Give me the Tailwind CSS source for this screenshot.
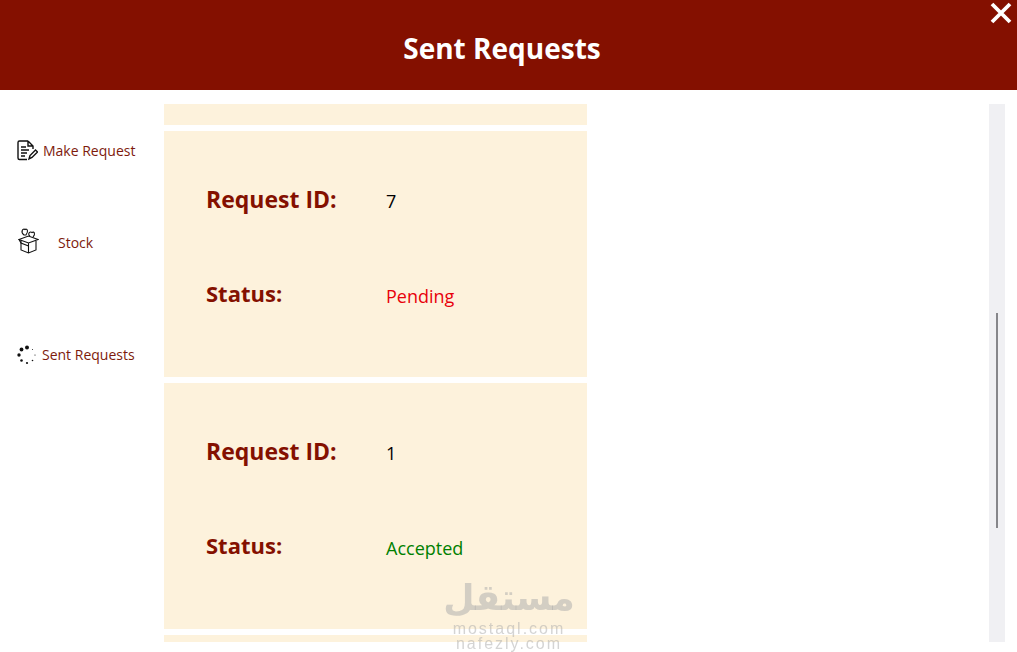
<!DOCTYPE html>
<html lang="en">

<head>
    <meta charset="UTF-8">
    <meta name="viewport" content="width=device-width, initial-scale=1.0">
    <title>Sent Requests</title>
    <script src="https://cdn.jsdelivr.net/npm/@tailwindcss/browser@4"></script>
</head>

<body class="bg-white w-[1017px] h-[652px] overflow-hidden relative font-['Open_Sans','Noto_Sans',sans-serif]">
    <header class="h-[90px] bg-[#841000] relative flex items-center justify-center">
        <h1 class="text-white text-[28px] font-bold ml-[-13px] mt-[5px]">Sent Requests</h1>
        <svg class="absolute right-[4px] top-[1px] w-[24px] h-[24px]" viewBox="0 0 24 24">
            <path d="M3 3 L21 21 M21 3 L3 21" stroke="#fff" stroke-width="3.8" />
        </svg>
    </header>

    <div class="flex h-[562px]">
        <!-- sidebar -->
        <nav class="w-[164px] shrink-0 relative text-[#7d1a0c] text-[14px]">
            <a class="absolute left-[17px] top-[50px] flex items-center gap-[5px]">
                <svg class="w-[21px] h-[21px]" viewBox="0 0 21 21" fill="none" stroke="#111" stroke-width="1.4">
                    <path d="M11 1 H2.500 A1.500 1.500 0 0 0 1 2.500 V18 A1.500 1.500 0 0 0 2.500 19.500 H10 M11 1 L16 6 V9 M11 1 V6 H16" />
                    <path d="M4 7 H9 M4 10 H12 M4 13 H10 M4 16 H8" />
                    <path d="M12 19 L13 15.500 L18.500 10 L20.500 12 L15 17.500 Z" />
                </svg>
                <span>Make Request</span>
            </a>
            <a class="absolute left-[18px] top-[137px] flex items-center gap-[19px] h-[28px] pt-[2px]">
                <svg class="w-[21px] h-[27px] mt-[-3px]" viewBox="0 0 21 27" fill="none" stroke="#111" stroke-width="1.1">
                    <path d="M3 14 V23 L10.500 26 L18 23 V14" />
                    <path d="M1 12.500 L10.500 9 L20 12.500 L10.500 16 Z M10.500 16 V26 M1 12.500 L3 16 L10.500 19" />
                    <path d="M6 8 C2 5 5 1 7 2.500 C9 1 11 4 8 8 Z" />
                    <path d="M12 9 C9 7 12 4 14 5.500 C16 4 18 7 15 10" />
                </svg>
                <span>Stock</span>
            </a>
            <a class="absolute left-[17px] top-[254px] flex items-center gap-[5px]">
                <svg class="w-[20px] h-[20px]" viewBox="0 0 20 20" fill="#111">
                    <circle cx="10" cy="2.500" r="2" />
                    <circle cx="4.500" cy="4.500" r="1.900" />
                    <circle cx="2" cy="10" r="1.700" />
                    <circle cx="4.500" cy="15.500" r="1.300" />
                    <circle cx="10" cy="18" r="1.100" />
                    <circle cx="15.500" cy="15.500" r="0.800" />
                    <circle cx="18" cy="10" r="0.600" />
                    <circle cx="15.500" cy="4.500" r="0.500" />
                </svg>
                <span>Sent Requests</span>
            </a>
        </nav>

        <!-- request list -->
        <main class="w-[423px] mt-[14px] h-[538px] flex flex-col gap-[6px] overflow-hidden">
            <div class="h-[21px] shrink-0 bg-[#fdf2dc]"></div>

            <section class="h-[246px] shrink-0 bg-[#fdf2dc] pl-[42px] pt-[52px]">
                <div class="flex items-center h-[32px]">
                    <span class="w-[180px] text-[#841000] text-[23px] font-bold">Request ID:</span>
                    <span class="text-black text-[18px] mt-[5px]">7</span>
                </div>
                <div class="flex items-center h-[32px] mt-[62px]">
                    <span class="w-[180px] text-[#841000] text-[22px] font-bold">Status:</span>
                    <span class="text-[#e8000b] text-[18px] mt-[7px]">Pending</span>
                </div>
            </section>

            <section class="h-[246px] shrink-0 bg-[#fdf2dc] pl-[42px] pt-[52px]">
                <div class="flex items-center h-[32px]">
                    <span class="w-[180px] text-[#841000] text-[23px] font-bold">Request ID:</span>
                    <span class="text-black text-[18px] mt-[5px]">1</span>
                </div>
                <div class="flex items-center h-[32px] mt-[62px]">
                    <span class="w-[180px] text-[#841000] text-[22px] font-bold">Status:</span>
                    <span class="text-[#008000] text-[18px] mt-[7px]">Accepted</span>
                </div>
            </section>

            <div class="h-[7px] shrink-0 bg-[#fdf2dc]"></div>
        </main>

        <!-- scrollbar -->
        <div class="w-[16px] h-[538px] mt-[14px] ml-[402px] bg-[#f0f0f3] relative">
            <div class="absolute left-[7px] top-[209px] w-[2px] h-[215px] bg-[#86868a]"></div>
        </div>
    </div>

    <!-- watermark -->
    <div class="absolute left-[446px] top-[575px] w-[126px] flex flex-col items-center text-[#aaa]/50 blur-[0.6px] pointer-events-none">
        <span dir="rtl" class="font-['DejaVu_Sans',sans-serif] font-bold text-[36px] leading-[46px] h-[46px]">مستقل</span>
        <span class="font-['Liberation_Sans',sans-serif] text-[16px] leading-[15px] h-[15px] tracking-[2px]">mostaql.com</span>
        <span class="font-['Liberation_Sans',sans-serif] text-[16px] leading-[15px] h-[15px] tracking-[2px]">nafezly.com</span>
    </div>
</body>

</html>
